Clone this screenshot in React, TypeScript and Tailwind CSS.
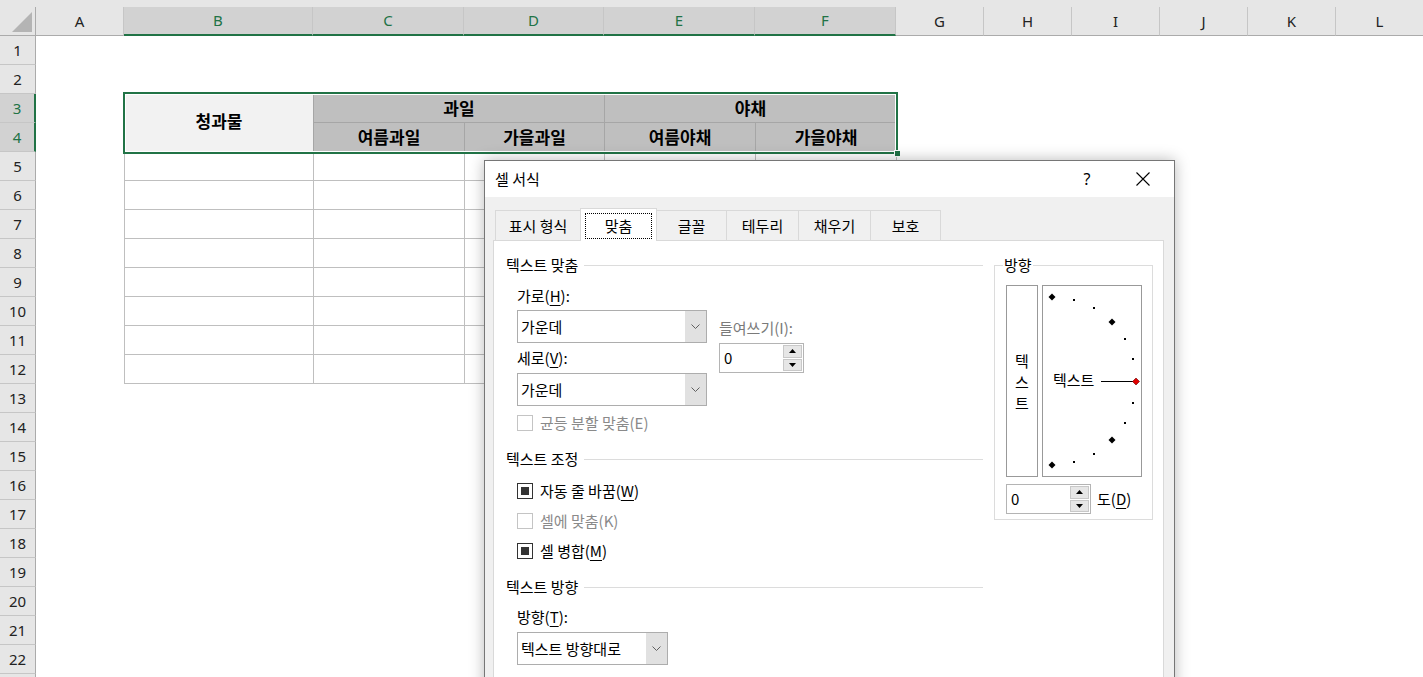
import React from "react";

const COLS = [
  { l: "A", w: "w-[88px]", sel: false },
  { l: "B", w: "w-[189px]", sel: true },
  { l: "C", w: "w-[151px]", sel: true },
  { l: "D", w: "w-[140px]", sel: true },
  { l: "E", w: "w-[151px]", sel: true },
  { l: "F", w: "w-[141px]", sel: true },
  { l: "G", w: "w-[88px]", sel: false },
  { l: "H", w: "w-[88px]", sel: false },
  { l: "I", w: "w-[88px]", sel: false },
  { l: "J", w: "w-[88px]", sel: false },
  { l: "K", w: "w-[88px]", sel: false },
  { l: "L", w: "w-[88px]", sel: false },
];

const ROWS = Array.from({ length: 22 }, (_, i) => i + 1);

function Chevron() {
  return (
    <svg width="9" height="5" viewBox="0 0 9 5">
      <path d="M0.5 0.5 L4.5 4.5 L8.5 0.5" fill="none" stroke="#606060" strokeWidth="1" />
    </svg>
  );
}

function Select({ w, value }: { w: string; value: string }) {
  return (
    <div className={`flex h-[33px] ${w} border border-[#adadad] bg-white`}>
      <div className="flex flex-1 items-center pl-[3px] leading-[20px]">{value}</div>
      <div className="flex w-[21px] items-center justify-center bg-[#e1e1e1]">
        <Chevron />
      </div>
    </div>
  );
}

function Spinner({ w }: { w: string }) {
  return (
    <div className={`flex h-[30px] ${w} border border-[#b4b4b4] bg-white`}>
      <div className="flex flex-1 items-center pl-[4px] leading-[20px]">0</div>
      <div className="flex w-[21px] flex-col gap-px p-px">
        <div className="flex flex-1 items-center justify-center border border-[#c8c8c8] bg-[#e6e6e6]">
          <svg width="7" height="4" viewBox="0 0 7 4">
            <path d="M0 4 L3.5 0 L7 4 Z" fill="#000" />
          </svg>
        </div>
        <div className="flex flex-1 items-center justify-center border border-[#c8c8c8] bg-[#e6e6e6]">
          <svg width="7" height="4" viewBox="0 0 7 4">
            <path d="M0 0 L3.5 4 L7 0 Z" fill="#000" />
          </svg>
        </div>
      </div>
    </div>
  );
}

function Check({ on, disabled, children }: { on?: boolean; disabled?: boolean; children: React.ReactNode }) {
  return (
    <div className="flex h-[20px] items-center gap-[7px]">
      <div
        className={`flex h-[16px] w-[16px] items-center justify-center border bg-white ${
          disabled ? "border-[#c4c4c4]" : "border-[#333333]"
        }`}
      >
        {on && <div className="h-[8px] w-[8px] bg-[#333333]" />}
      </div>
      <span className={`leading-[20px] ${disabled ? "text-[#8a8a8a]" : "text-black"}`}>{children}</span>
    </div>
  );
}

function GroupHead({ children }: { children: React.ReactNode }) {
  return (
    <div className="flex h-[20px] items-center">
      <span className="leading-[20px]">{children}</span>
      <div className="ml-[6px] h-px flex-1 bg-[#dcdcdc]" />
    </div>
  );
}

function U({ children }: { children: React.ReactNode }) {
  return <span className="underline underline-offset-[3px]">{children}</span>;
}

function Dial() {
  const big = [
    [9, 11],
    [69, 36],
    [69, 154],
    [9, 179],
  ];
  const small = [
    [31, 14],
    [51, 22],
    [82, 53],
    [90, 73],
    [90, 117],
    [82, 137],
    [51, 168],
    [31, 176],
  ];
  const d = (x: number, y: number) => `M${x} ${y - 3.5} L${x + 3.5} ${y} L${x} ${y + 3.5} L${x - 3.5} ${y} Z`;
  return (
    <svg width="98" height="190" viewBox="0 0 98 190">
      {big.map(([x, y]) => (
        <path key={`${x}-${y}`} d={d(x, y)} fill="#000" />
      ))}
      {small.map(([x, y]) => (
        <rect key={`${x}-${y}`} x={x - 1} y={y - 1} width="2" height="2" fill="#000" />
      ))}
      <text x="10" y="100" fontSize="15" fontFamily="'Noto Sans CJK KR', sans-serif" fill="#000">
        텍스트
      </text>
      <line x1="58" y1="95.5" x2="90" y2="95.5" stroke="#000" strokeWidth="1" />
      <path d={d(93, 95.5)} fill="#e00000" stroke="#600" strokeWidth="0.6" />
    </svg>
  );
}

function Tab({ w, children }: { w: string; children: React.ReactNode }) {
  return (
    <div
      className={`-ml-px flex h-[30px] ${w} items-center justify-center border border-b-0 border-[#d9d9d9] bg-[#f0f0f0] leading-[20px]`}
    >
      {children}
    </div>
  );
}

function FormatDialog() {
  return (
    <div className="absolute left-[484px] top-[160px] flex h-[540px] w-[691px] flex-col border border-[#767676] bg-[#f0f0f0] text-[15px] text-black shadow-[0_0_14px_rgba(0,0,0,0.28)]">
      <div className="flex h-[36px] items-center bg-white">
        <div className="flex-1 pl-[10px] leading-[20px]">셀 서식</div>
        <div className="flex items-center gap-[10px] pr-[8px]">
          <div className="flex w-[46px] justify-center font-['Noto_Sans',sans-serif] text-[16px]">?</div>
          <div className="flex w-[46px] justify-center">
            <svg width="14" height="14" viewBox="0 0 14 14">
              <path d="M0.5 0.5 L13.5 13.5 M13.5 0.5 L0.5 13.5" stroke="#000" strokeWidth="1.1" />
            </svg>
          </div>
        </div>
      </div>
      <div className="flex flex-1 flex-col px-[8px] pt-[11px]">
        <div className="flex h-[32px] items-end pl-[3px]">
          <Tab w="w-[86px]">표시 형식</Tab>
          <div className="relative z-10 -mb-px -ml-px flex h-[33px] w-[77px] border border-b-0 border-[#d9d9d9] bg-white p-[4px] pb-[2px]">
            <div className="flex flex-1 items-center justify-center border border-dotted border-black leading-[20px]">
              맞춤
            </div>
          </div>
          <Tab w="w-[71px]">글꼴</Tab>
          <Tab w="w-[73px]">테두리</Tab>
          <Tab w="w-[73px]">채우기</Tab>
          <Tab w="w-[71px]">보호</Tab>
        </div>
        <div className="flex w-[671px] flex-1 border border-[#d9d9d9] bg-white">
          <div className="flex w-[489px] flex-col pl-[12px] pt-[14px]">
            <GroupHead>텍스트 맞춤</GroupHead>
            <div className="flex flex-col pl-[11px]">
              <div className="mt-[11px] leading-[20px]">
                가로(<U>H</U>):
              </div>
              <div className="mt-[4px] flex gap-[12px]">
                <div className="flex flex-col">
                  <Select w="w-[190px]" value="가운데" />
                  <div className="mt-[5px] leading-[20px]">
                    세로(<U>V</U>):
                  </div>
                  <div className="mt-[5px]">
                    <Select w="w-[190px]" value="가운데" />
                  </div>
                </div>
                <div className="flex flex-col pt-[8px]">
                  <div className="leading-[20px] text-[#7a7a7a]">들여쓰기(I):</div>
                  <div className="mt-[5px]">
                    <Spinner w="w-[85px]" />
                  </div>
                </div>
              </div>
              <div className="mt-[7px]">
                <Check disabled>균등 분할 맞춤(E)</Check>
              </div>
            </div>
            <div className="mt-[16px]">
              <GroupHead>텍스트 조정</GroupHead>
            </div>
            <div className="flex flex-col gap-[10px] pl-[11px] pt-[12px]">
              <Check on>
                자동 줄 바꿈(<U>W</U>)
              </Check>
              <Check disabled>셀에 맞춤(K)</Check>
              <Check on>
                셀 병합(<U>M</U>)
              </Check>
            </div>
            <div className="mt-[16px]">
              <GroupHead>텍스트 방향</GroupHead>
            </div>
            <div className="flex flex-col pl-[11px]">
              <div className="mt-[10px] leading-[20px]">
                방향(<U>T</U>):
              </div>
              <div className="mt-[5px]">
                <Select w="w-[151px]" value="텍스트 방향대로" />
              </div>
            </div>
          </div>
          <div className="relative ml-[11px] mt-[24px] h-[255px] w-[159px] border border-[#dcdcdc] pl-[11px] pt-[19px]">
            <div className="absolute -top-[11px] left-[8px] bg-white px-px leading-[20px]">방향</div>
            <div className="flex gap-[4px]">
              <div className="flex h-[192px] w-[32px] flex-col items-center justify-center border border-[#999999] leading-[21px]">
                <span>텍</span>
                <span>스</span>
                <span>트</span>
              </div>
              <div className="h-[192px] w-[100px] border border-[#999999]">
                <Dial />
              </div>
            </div>
            <div className="mt-[7px] flex items-center gap-[6px]">
              <Spinner w="w-[85px]" />
              <span className="leading-[20px]">
                도(<U>D</U>)
              </span>
            </div>
          </div>
        </div>
      </div>
    </div>
  );
}

function DataTable() {
  const head = "flex items-center justify-center border-r border-b border-[#a6a6a6] text-[17px] font-bold leading-[20px]";
  return (
    <div className="relative ml-[88px] mt-[57px] w-fit border-l border-t border-[#bfbfbf]">
      <div className="grid grid-cols-[189px_151px_140px_151px_141px] auto-rows-[29px]">
        <div className={`${head} row-span-2 bg-[#f2f2f2] pb-[4px]`}>청과물</div>
        <div className={`${head} col-span-2 bg-[#bfbfbf]`}>과일</div>
        <div className={`${head} col-span-2 bg-[#bfbfbf]`}>야채</div>
        <div className={`${head} bg-[#bfbfbf]`}>여름과일</div>
        <div className={`${head} bg-[#bfbfbf]`}>가을과일</div>
        <div className={`${head} bg-[#bfbfbf]`}>여름야채</div>
        <div className={`${head} bg-[#bfbfbf]`}>가을야채</div>
        {Array.from({ length: 40 }, (_, i) => (
          <div key={i} className="border-r border-b border-[#bfbfbf] bg-white" />
        ))}
      </div>
      <div className="pointer-events-none absolute -left-[2px] -top-[2px] h-[62px] w-[775px] border-2 border-[#217346]">
        <div className="h-full w-full border border-white" />
      </div>
      <div className="absolute left-[769px] top-[56px] h-[7px] w-[7px] border border-white bg-[#217346]" />
    </div>
  );
}

export default function App() {
  return (
    <div className="relative h-[677px] w-[1423px] overflow-hidden bg-white font-['Noto_Sans_CJK_KR',sans-serif] text-black">
      <div className="h-[7px] bg-[#e6e6e6]" />
      <div className="flex h-[29px] bg-[#e6e6e6] font-['Noto_Sans',sans-serif] text-[15px]">
        <div className="relative w-[36px] shrink-0 border-r border-b border-[#ababab]">
          <svg className="absolute bottom-[3px] right-[3px]" width="20" height="20" viewBox="0 0 20 20">
            <path d="M20 0 L20 20 L0 20 Z" fill="#b4b4b4" />
          </svg>
        </div>
        {COLS.map((c) => (
          <div
            key={c.l}
            className={`flex ${c.w} shrink-0 items-center justify-center border-r border-r-[#c6c6c6] ${
              c.sel
                ? "border-b-2 border-b-[#217346] bg-[#d2d2d2] text-[#217346]"
                : "border-b border-b-[#ababab] text-[#222222]"
            }`}
          >
            {c.l}
          </div>
        ))}
        <div className="flex-1 border-b border-b-[#ababab]" />
      </div>
      <div className="flex">
        <div className="flex w-[36px] shrink-0 flex-col font-['Noto_Sans',sans-serif] text-[15px]">
          {ROWS.map((r) => {
            const sel = r === 3 || r === 4;
            return (
              <div
                key={r}
                className={`flex h-[29px] shrink-0 items-center justify-center border-b border-[#c6c6c6] ${
                  sel
                    ? "border-r-2 border-r-[#217346] bg-[#d2d2d2] text-[#217346]"
                    : "border-r border-r-[#ababab] bg-[#e6e6e6] text-[#222222]"
                }`}
              >
                {r}
              </div>
            );
          })}
          <div className="h-[29px] shrink-0 border-r border-r-[#ababab] bg-[#e6e6e6]" />
        </div>
        <div className="flex-1">
          <DataTable />
        </div>
      </div>
      <FormatDialog />
    </div>
  );
}
